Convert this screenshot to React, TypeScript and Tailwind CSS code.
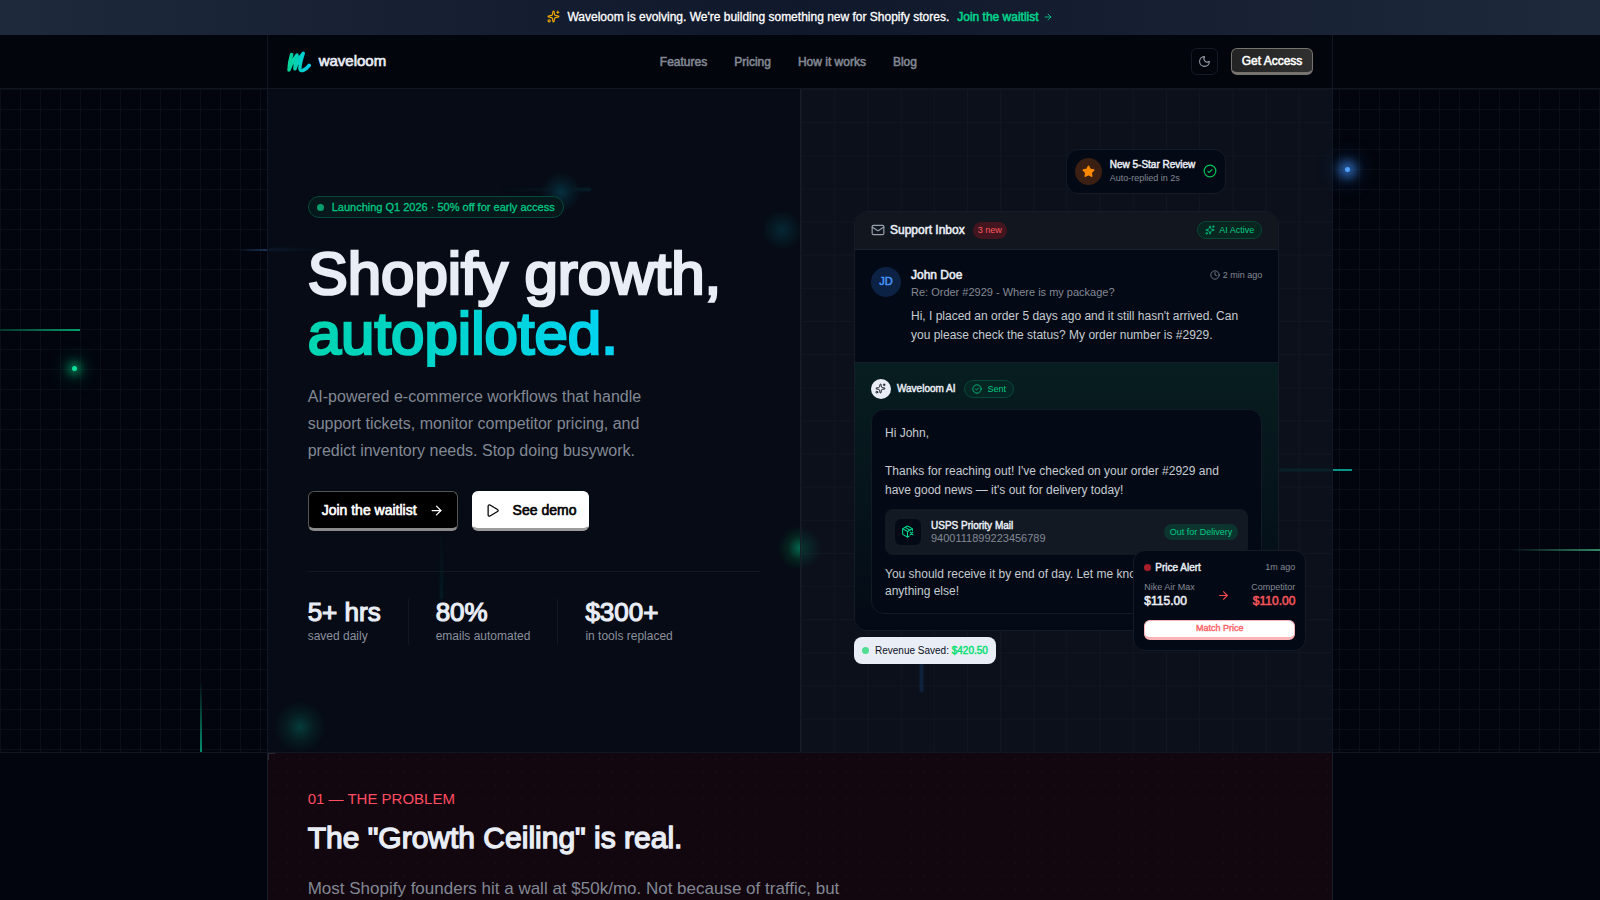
import React from "react";
import { ArrowRight, Clock, Mail, Moon, PackageX, Play, Sparkles, Star } from "lucide-react";

type StatProps = {
  value: string;
  label: string;
};

const navLinks = ["Features", "Pricing", "How it works", "Blog"];

const stats: StatProps[] = [
  { value: "5+ hrs", label: "saved daily" },
  { value: "80%", label: "emails automated" },
  { value: "$300+", label: "in tools replaced" },
];

// A heavier look for headings and labels, in proportion to their size
const semibold = "[-webkit-text-stroke:0.045em]";
const medium = "[-webkit-text-stroke:0.025em]";

const gridLines =
  "bg-[linear-gradient(to_right,#0a0e16_1px,transparent_1px),linear-gradient(to_bottom,#0a0e16_1px,transparent_1px)] bg-[size:20px_20px]";

const Logo = () => (
  <svg width="24" height="22" viewBox="0 0 24 22" fill="none" aria-hidden="true">
    <defs>
      <linearGradient id="logo" x1="0" y1="0" x2="24" y2="0" gradientUnits="userSpaceOnUse">
        <stop offset="0" stopColor="#00d490" />
        <stop offset="1" stopColor="#00cdf0" />
      </linearGradient>
    </defs>
    <path
      d="M4.600 3.6C3.200 8.300 2 14 2 19C4.300 12.800 7 7.600 10 4C8.800 8.600 7.800 13.200 8 17.800C9.800 12 12.800 6.200 16.200 2.400C14.600 7.500 12.800 13 12.900 17.400C13.200 21.500 18.600 19.200 22.200 14.400"
      stroke="url(#logo)"
      strokeWidth="3.500"
      strokeLinecap="round"
      strokeLinejoin="round"
    />
  </svg>
);

const CheckBadge = ({ size }: { size: number }) => (
  <svg width={size} height={size} viewBox="0 0 24 24" fill="none" stroke="currentColor" strokeWidth="2" strokeLinecap="round" strokeLinejoin="round" aria-hidden="true">
    <circle cx="12" cy="12" r="10" />
    <path d="M8.500 12.500L10.500 14.500L15.500 9.500" />
  </svg>
);

const Stat: React.FC<StatProps> = ({ value, label }) => (
  <div>
    <p className={`text-[26px] leading-[27px] text-[#e9edf5] ${semibold}`}>{value}</p>
    <p className="mt-[2px] text-xs leading-[17px] text-[#8a909c]">{label}</p>
  </div>
);

const Banner = () => (
  <div className="flex h-[35px] items-center justify-center bg-linear-to-r from-[#1e293b] via-[#10182b] to-[#1e293b] pb-[2px] text-xs text-white">
    <Sparkles size={13} className="mr-[7px] text-[#fdb000]" />
    <span className={medium}>Waveloom is evolving. We're building something new for Shopify stores.</span>
    <a href="#waitlist" className="ml-2 flex items-center gap-1 text-[#00d38b]">
      <span className={semibold}>Join the waitlist</span>
      <ArrowRight size={10} />
    </a>
  </div>
);

const Header = () => (
  <header className="grid grid-cols-[1fr_4fr_1fr] border-b border-[#111722] bg-[#02050c]">
    <div className="col-start-2 flex h-[53px] items-center justify-between border-x border-[#111722] px-[19px]">
      <a href="#home" className="flex items-center gap-2 text-[15px] text-[#e9edf5]">
        <Logo />
        <span className={semibold}>waveloom</span>
      </a>
      <nav className="flex gap-[27px] text-xs text-[#828894]">
        {navLinks.map((link) => (
          <a key={link} href="#" className={semibold}>
            {link}
          </a>
        ))}
      </nav>
      <div className="flex items-center gap-[13px]">
        <button type="button" aria-label="Toggle theme" className="flex size-[27px] items-center justify-center rounded-md border border-[#141a26] text-[#9aa1ae]">
          <Moon size={13} />
        </button>
        <button type="button" className={`h-[27px] rounded-md border border-b-3 border-[#77736f] bg-linear-to-r from-[#232323] to-[#303030] px-[10px] text-xs text-white ${semibold}`}>
          Get Access
        </button>
      </div>
    </div>
  </header>
);

const ReviewToast = () => (
  <div className="absolute -top-[62px] right-[53px] flex h-[45px] items-center rounded-xl border border-[#141b27] bg-[#040a15] px-2">
    <span className="flex size-[27px] items-center justify-center rounded-full bg-[#3a1f12]">
      <Star size={13} className="fill-[#ff8a00] text-[#ff8a00]" />
    </span>
    <div className="mx-2">
      <p className={`text-[10px] leading-[14px] text-[#e9edf5] ${semibold}`}>New 5-Star Review</p>
      <p className="text-[9px] leading-[13px] text-[#828894]">Auto-replied in 2s</p>
    </div>
    <span className="text-[#00c758]">
      <CheckBadge size={14} />
    </span>
  </div>
);

const PriceAlert = () => (
  <div className="absolute -right-[27px] -bottom-5 w-[173px] rounded-xl border border-[#141b27] bg-[#040a15] p-[10px]">
    <div className="flex items-center justify-between leading-[13px]">
      <p className={`flex items-center gap-1 text-[10px] text-[#e9edf5] ${semibold}`}>
        <span className="size-[7px] rounded-full bg-[#a81f2c]"></span>
        Price Alert
      </p>
      <span className="text-[9px] text-[#828894]">1m ago</span>
    </div>
    <div className="mt-[7px] flex items-center justify-between">
      <div>
        <p className="text-[9px] leading-[12px] text-[#828894]">Nike Air Max</p>
        <p className={`text-xs leading-[17px] text-[#e9edf5] ${semibold}`}>$115.00</p>
      </div>
      <ArrowRight size={13} className="text-[#fb4a50]" />
      <div className="text-right">
        <p className="text-[9px] leading-[12px] text-[#828894]">Competitor</p>
        <p className={`text-xs leading-[17px] text-[#f4545b] ${semibold}`}>$110.00</p>
      </div>
    </div>
    <button type="button" className={`mt-[10px] block h-5 w-full rounded-md border border-b-3 border-[#fbb4b7] bg-white text-[9px] leading-none text-[#ff6467] ${semibold}`}>
      Match Price
    </button>
  </div>
);

const InboxCard = () => (
  <div className="relative w-full">
    <article className="overflow-hidden rounded-[13px] border border-[#151c28] bg-[#040a15]">
      <div className="flex h-[38px] items-center justify-between border-b border-[#1b222d] bg-[#11161f] px-4">
        <div className="flex items-center">
          <Mail size={14} className="text-[#9aa1ae]" />
          <h2 className={`ml-[5px] text-xs text-[#e9edf5] ${semibold}`}>Support Inbox</h2>
          <span className="ml-2 rounded-full bg-[#43161f] px-[5px] text-[9px] leading-[17px] text-[#fb5a60]">3 new</span>
        </div>
        <span className="flex items-center gap-1 rounded-full border border-[#0a4536] bg-[#07261f] px-[7px] text-[9px] leading-[16px] text-[#00c984]">
          <Sparkles size={10} />
          AI Active
        </span>
      </div>

      <div className="flex gap-[10px] border-b border-[#151c28] px-4 pt-4 pb-[17px]">
        <span className={`mt-px flex size-[30px] shrink-0 items-center justify-center rounded-full bg-[#0c2245] text-[11px] text-[#4797f8] ${semibold}`}>
          JD
        </span>
        <div className="flex-1">
          <div className="flex items-center justify-between leading-[18px]">
            <h3 className={`text-xs leading-[18px] text-[#e9edf5] ${semibold}`}>John Doe</h3>
            <span className="flex items-center gap-[3px] text-[9px] text-[#828894]">
              <Clock size={10} />2 min ago
            </span>
          </div>
          <p className="text-[11px] leading-[17px] text-[#828894]">Re: Order #2929 - Where is my package?</p>
          <p className="mt-[6px] text-xs leading-[19px] text-[#c6cad2]">
            Hi, I placed an order 5 days ago and it still hasn't arrived. Can
            <br />
            you please check the status? My order number is #2929.
          </p>
        </div>
      </div>

      <div className="bg-linear-to-b from-[#071e20] to-[#040a15] p-4">
        <div className="flex h-5 items-center">
          <span className="flex size-5 items-center justify-center rounded-full bg-[#e9edf5] text-[#0a101c]">
            <Sparkles size={11} />
          </span>
          <h3 className={`ml-[6px] text-[10px] text-[#e9edf5] ${semibold}`}>Waveloom AI</h3>
          <span className="ml-2 flex items-center gap-[6px] rounded-full border border-[#07483a] bg-[#062623] px-[7px] text-[9px] leading-[16px] text-[#00c984]">
            <CheckBadge size={10} />
            Sent
          </span>
        </div>
        <div className="mt-[10px] rounded-[13px] border border-[#121a26] bg-[#040a15] px-[13px] pt-[14px] pb-[13px] text-xs leading-[19px] text-[#c6cad2]">
          <p>Hi John,</p>
          <p className="mt-[19px]">
            Thanks for reaching out! I've checked on your order #2929 and
            <br />
            have good news — it's out for delivery today!
          </p>
          <div className="mt-[9px] flex items-center rounded-lg bg-[#131923] px-[10px] py-[10px]">
            <span className="flex size-[26px] items-center justify-center rounded-md bg-[#040a15] text-[#00d38b]">
              <PackageX size={13} />
            </span>
            <div className="ml-[10px] flex-1">
              <p className={`text-[10px] leading-[13px] text-[#e9edf5] ${semibold}`}>USPS Priority Mail</p>
              <p className="text-[11px] leading-[12px] text-[#828894]">9400111899223456789</p>
            </div>
            <span className="rounded-full bg-[#0c3530] px-[6px] text-[9px] leading-[16px] text-[#00c984]">Out for Delivery</span>
          </div>
          <p className="mt-[11px] leading-[17px]">
            You should receive it by end of day. Let me know if you need
            <br />
            anything else!
          </p>
        </div>
      </div>
    </article>

    <ReviewToast />
    <PriceAlert />
    <div className="absolute -bottom-[33px] left-0 flex h-[27px] items-center rounded-lg bg-[#e9edf5] px-2 text-[10px] text-[#0a101c]">
      <span className="mr-[6px] size-[7px] rounded-full bg-[#4fdd92]"></span>
      Revenue Saved:&nbsp;<span className={`text-[#05df72] ${semibold}`}>$420.50</span>
    </div>
  </div>
);

// Moving light trails behind the hero, frozen at their resting places
const LeftLights = () => (
  <>
    <span className="absolute top-[240px] left-0 h-[2px] w-20 bg-linear-to-r from-[#04382c] to-[#04a06c]"></span>
    <span className="absolute top-[277px] left-[72px] size-[5px] rounded-full bg-[#0be09a] shadow-[0_0_8px_4px_#00a86f99,0_0_18px_8px_#00a86f40]"></span>
    <span className="absolute top-[160px] right-0 h-[2px] w-[30px] bg-linear-to-r from-transparent to-[#1b3157]"></span>
    <span className="absolute bottom-0 left-[200px] h-[70px] w-[2px] bg-linear-to-b from-transparent to-[#04906f]"></span>
  </>
);

const RightLights = () => (
  <>
    <span className="absolute top-[78px] left-[12px] size-[5px] rounded-full bg-[#51a2ff] shadow-[0_0_10px_6px_#3a80dcaa,0_0_20px_10px_#2b6cc440]"></span>
    <span className="absolute top-[380px] left-0 h-[2px] w-[19px] bg-[#0a9488]"></span>
    <span className="absolute top-[460px] right-0 h-[2px] w-[90px] bg-linear-to-r from-transparent to-[#318866]"></span>
  </>
);

const Hero = () => (
  <section className="grid grid-cols-[1fr_4fr_1fr] border-b border-[#111722]">
    <div className={`relative ${gridLines}`}>
      <LeftLights />
    </div>
    <div className="grid grid-cols-2 border-x border-[#111722]">
      <div className="relative bg-[#060b15] px-10 py-[107px]">
        <div className="pointer-events-none absolute inset-0 overflow-hidden">
          <span className="absolute top-[159px] left-0 h-[3px] w-16 bg-linear-to-r from-[#0c1a2c] to-transparent blur-[1px]"></span>
          <span className="absolute top-[99px] left-[233px] h-[3px] w-[90px] bg-linear-to-r from-transparent to-[#06232e] blur-[1px]"></span>
          <span className="absolute top-[79px] left-[269px] size-12 bg-[radial-gradient(circle,#06303f_0%,#061a26_30%,transparent_60%)]"></span>
          <span className="absolute top-[117px] right-[-6px] size-12 bg-[radial-gradient(circle,#052734_0%,#061923_30%,transparent_60%)]"></span>
          <span className="absolute top-[435px] right-[-24px] size-12 bg-[radial-gradient(circle,#04684f_0%,#05241f_35%,transparent_65%)]"></span>
          <span className="absolute top-[610px] left-[4px] size-14 bg-[radial-gradient(circle,#053b3a_0%,#061b20_35%,transparent_65%)]"></span>
          <span className="absolute top-[440px] left-[172px] h-[70px] w-[3px] bg-linear-to-b from-transparent to-[#051f26] blur-[1px]"></span>
        </div>

        <div className="relative">
          <p className={`flex h-[22px] w-fit items-center gap-2 rounded-full border border-[#07483a] bg-[#05191c] px-2 text-[11px] text-[#00c984] ${medium}`}>
            <span className="size-[7px] rounded-full bg-[#04a06c]"></span>
            Launching Q1 2026 · 50% off for early access
          </p>
          <h1 className={`mt-[26px] text-6xl leading-[60px] text-[#e9edf5] ${semibold}`}>
            Shopify growth,
            <br />
            <span className="bg-linear-to-r from-[#00d5b0] to-[#00d3f2] bg-clip-text text-transparent">autopiloted.</span>
          </h1>
          <p className="mt-[19px] text-base leading-[27px] text-[#828894]">
            AI-powered e-commerce workflows that handle
            <br />
            support tickets, monitor competitor pricing, and
            <br />
            predict inventory needs. Stop doing busywork.
          </p>
          <div className="mt-[27px] flex gap-[14px] text-sm">
            <button type="button" className="flex h-10 items-center gap-3 rounded-md border border-b-3 border-[#555555] border-b-[#8a8a8a] bg-black px-[13px] text-white">
              <span className={semibold}>Join the waitlist</span>
              <ArrowRight size={15} />
            </button>
            <button type="button" className="flex h-10 items-center gap-[13px] rounded-md border border-b-3 border-white border-b-[#9c9c9c] bg-white px-[12px] text-black">
              <Play size={15} strokeWidth={2} />
              <span className={semibold}>See demo</span>
            </button>
          </div>
          <div className="mt-10 flex gap-[27px] border-t border-[#121822] pt-[27px]">
            {stats.map((stat, i) => (
              <React.Fragment key={stat.label}>
                {i > 0 && <span className="w-px bg-[#121822]"></span>}
                <Stat {...stat} />
              </React.Fragment>
            ))}
          </div>
        </div>
      </div>

      <div className="relative flex items-center border-l border-[#161c28] bg-[#0b101a] bg-[linear-gradient(to_right,#111620_1px,transparent_1px),linear-gradient(to_bottom,#111620_1px,transparent_1px)] bg-[size:6.25%_5%] px-[53px]">
        <span className="absolute top-[380px] right-0 h-[2px] w-[53px] bg-[#0a2c30] blur-[1px]"></span>
        <span className="absolute bottom-[60px] left-[119px] h-[36px] w-[3px] bg-[#12294a] blur-[1px]"></span>
        <span className="absolute top-[435px] left-0 h-12 w-6 bg-[radial-gradient(circle_at_left,#04684f_0%,transparent_60%)] opacity-40"></span>
        <InboxCard />
      </div>
    </div>
    <div className={`relative ${gridLines} bg-position-[6px_0px]`}>
      <RightLights />
    </div>
  </section>
);

const Problem = () => (
  <section className="grid grid-cols-[1fr_4fr_1fr]">
    <div className="relative col-start-2 border-x border-[#1a1f2b] bg-[#12060f] bg-[radial-gradient(#180b15_1px,transparent_1px)] bg-[size:13px_13px] px-10 pt-[36px]">
      <span className="absolute top-0 left-0 size-[7px] border-t border-l border-[#2a2733]"></span>
      <p className="text-[15px] leading-5 text-[#ff4d62]">01 — THE PROBLEM</p>
      <h2 className={`mt-[9px] text-3xl leading-[40px] text-[#e9edf5] ${semibold}`}>The "Growth Ceiling" is real.</h2>
      <p className="mt-[17px] text-[17px] leading-[28px] text-[#828894]">
        Most Shopify founders hit a wall at $50k/mo. Not because of traffic, but
      </p>
    </div>
  </section>
);

const App: React.FC = () => {
  return (
    <div className="h-screen overflow-hidden bg-[#02050d] font-['Liberation_Sans',Arial,sans-serif]">
      <Banner />
      <Header />
      <main>
        <Hero />
        <Problem />
      </main>
    </div>
  );
};

export default App;
